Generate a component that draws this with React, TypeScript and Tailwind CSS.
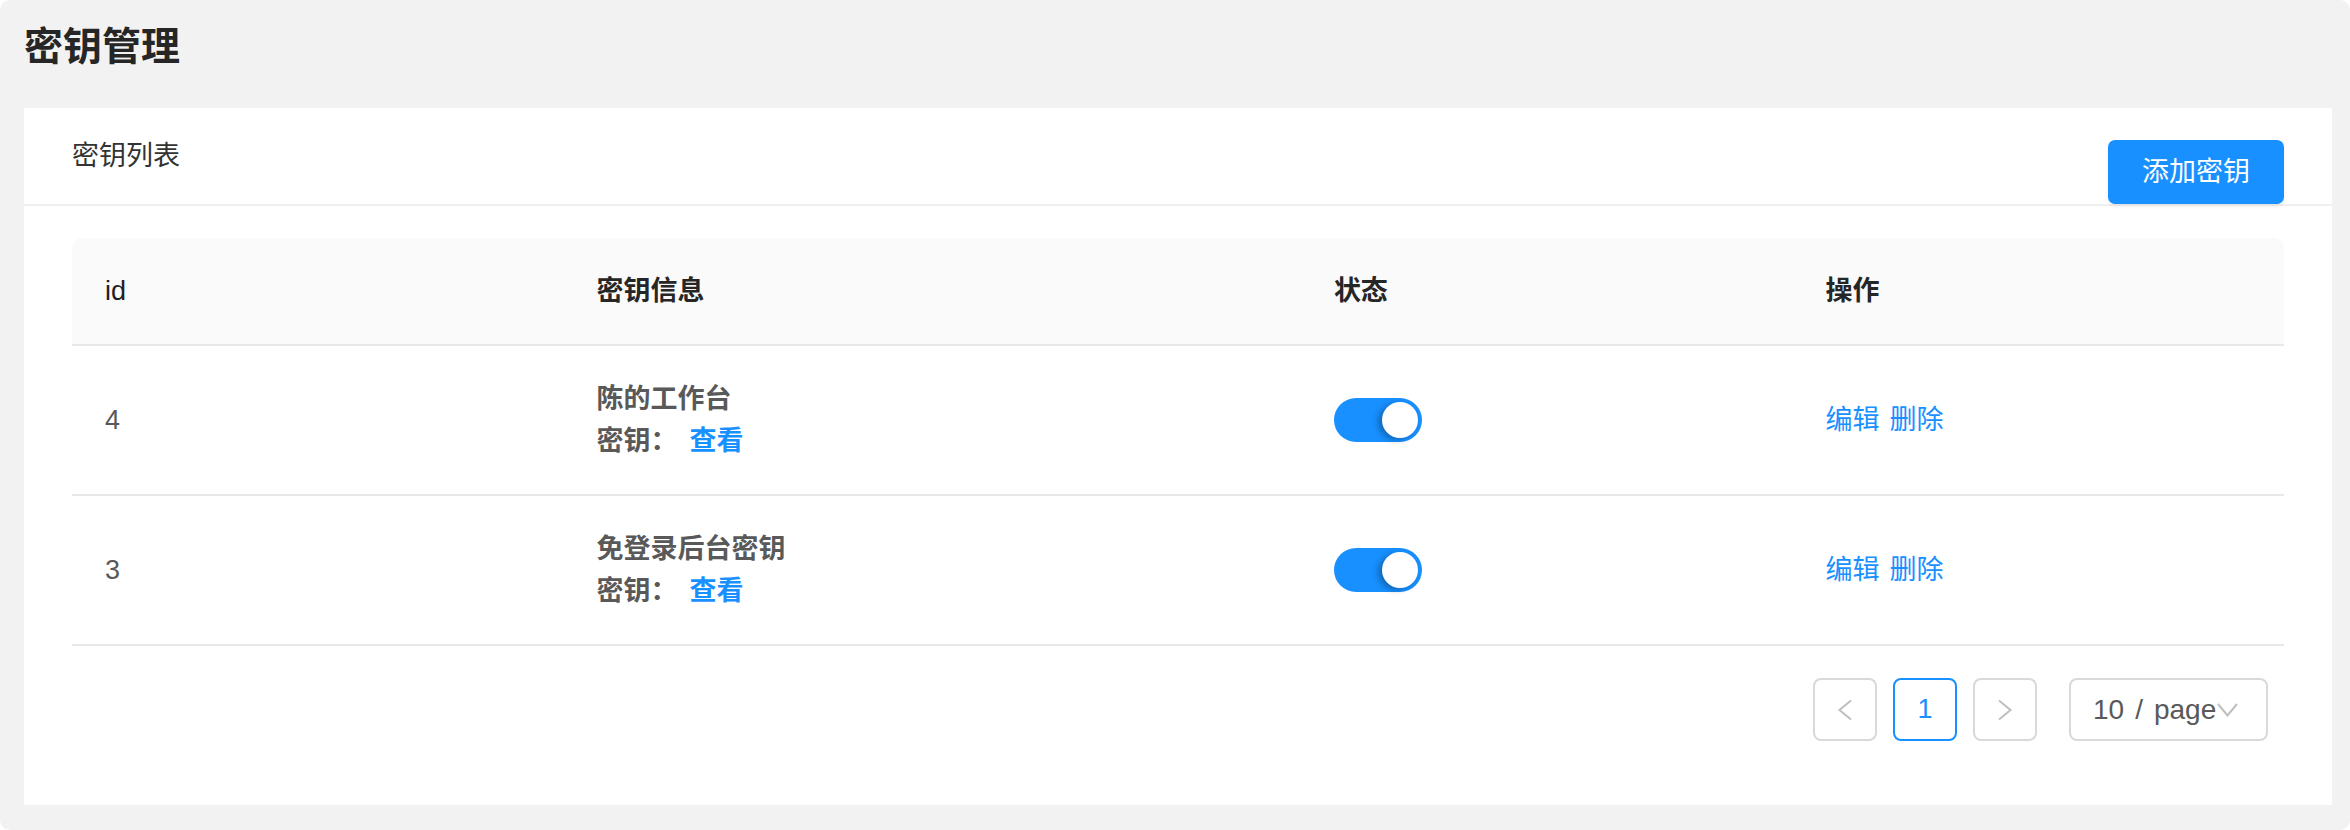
import React from "react";

const rows = [
  { id: "4", name: "陈的工作台" },
  { id: "3", name: "免登录后台密钥" },
];

function Toggle() {
  return (
    <div className="flex h-[44px] w-[88px] items-center justify-end rounded-full bg-[#1890ff] pr-[4px]">
      <div className="h-[36px] w-[36px] rounded-full bg-white shadow-[-4px_2px_6px_rgba(0,0,0,0.28)]" />
    </div>
  );
}

export default function App() {
  return (
    <div className="h-[830px] w-[2350px] bg-white font-['Liberation_Sans','Noto_Sans_CJK_SC',sans-serif]">
      <div className="flex h-full flex-col rounded-[10px] bg-[#f2f2f2] pl-[24px] pr-[18px]">
        <div className="h-[108px] pt-[24px]">
          <h1 className="text-[39px] font-bold leading-[46px] text-[#262626]">密钥管理</h1>
        </div>
        <div className="h-[697px] bg-white">
          <div className="flex h-[98px] justify-between border-b-2 border-[#f0f0f0] pl-[48px] pr-[48px]">
            <div className="flex h-[96px] items-center text-[27px] leading-[36px] text-[#333333]">密钥列表</div>
            <button className="mt-[32px] h-[64px] w-[176px] rounded-[7px] bg-[#1890ff] text-[27px] leading-[64px] text-white shadow-[0_3px_4px_rgba(0,0,0,0.06)]">
              添加密钥
            </button>
          </div>
          <div className="px-[48px] pt-[32px]">
            <div className="grid h-[108px] grid-cols-[2fr_3fr_2fr_2fr] items-center rounded-t-[10px] border-b-2 border-[#e8e8e8] bg-[#fafafa] text-[27px] font-bold text-[#262626]">
              <div className="px-[33px] font-normal text-[#1f1f1f]">id</div>
              <div className="px-[33px]">密钥信息</div>
              <div className="px-[33px]">状态</div>
              <div className="px-[33px]">操作</div>
            </div>
            {rows.map((r) => (
              <div
                key={r.id}
                className="grid h-[150px] grid-cols-[2fr_3fr_2fr_2fr] items-center border-b-2 border-[#e8e8e8] text-[27px] text-[#595959]"
              >
                <div className="px-[33px] leading-[36px]">{r.id}</div>
                <div className="px-[33px] font-bold leading-[42px]">
                  <div>{r.name}</div>
                  <div className="flex">
                    <span>密钥：</span>
                    <span className="ml-[12px] text-[#1890ff]">查看</span>
                  </div>
                </div>
                <div className="px-[33px]">
                  <Toggle />
                </div>
                <div className="flex gap-[10px] px-[33px] leading-[36px] text-[#1890ff]">
                  <span>编辑</span>
                  <span>删除</span>
                </div>
              </div>
            ))}
            <div className="mt-[32px] flex justify-end gap-[16px] pr-[16px]">
              <div className="flex h-[63px] w-[64px] items-center justify-center rounded-[8px] border-2 border-[#d9d9d9]">
                <svg width="16" height="22" viewBox="0 0 16 22" fill="none">
                  <path d="M14 1.5 L2.5 11 L14 20.5" stroke="#bfbfbf" strokeWidth="2" />
                </svg>
              </div>
              <div className="flex h-[63px] w-[64px] items-center justify-center rounded-[8px] border-2 border-[#1890ff] text-[27px] text-[#1890ff]">
                1
              </div>
              <div className="flex h-[63px] w-[64px] items-center justify-center rounded-[8px] border-2 border-[#d9d9d9]">
                <svg width="16" height="22" viewBox="0 0 16 22" fill="none">
                  <path d="M2 1.5 L13.5 11 L2 20.5" stroke="#bfbfbf" strokeWidth="2" />
                </svg>
              </div>
              <div className="ml-[16px] flex h-[63px] w-[199px] items-center rounded-[8px] border-2 border-[#d9d9d9] pl-[22px] text-[28px] text-[#595959]">
                <span>10</span>
                <span className="ml-[11px]">/</span>
                <span className="ml-[11px]">page</span>
                <svg className="ml-[1px]" width="21" height="14" viewBox="0 0 21 14" fill="none">
                  <path d="M1 1 L10.5 12.5 L20 1" stroke="#bfbfbf" strokeWidth="2" />
                </svg>
              </div>
            </div>
          </div>
        </div>
      </div>
    </div>
  );
}
